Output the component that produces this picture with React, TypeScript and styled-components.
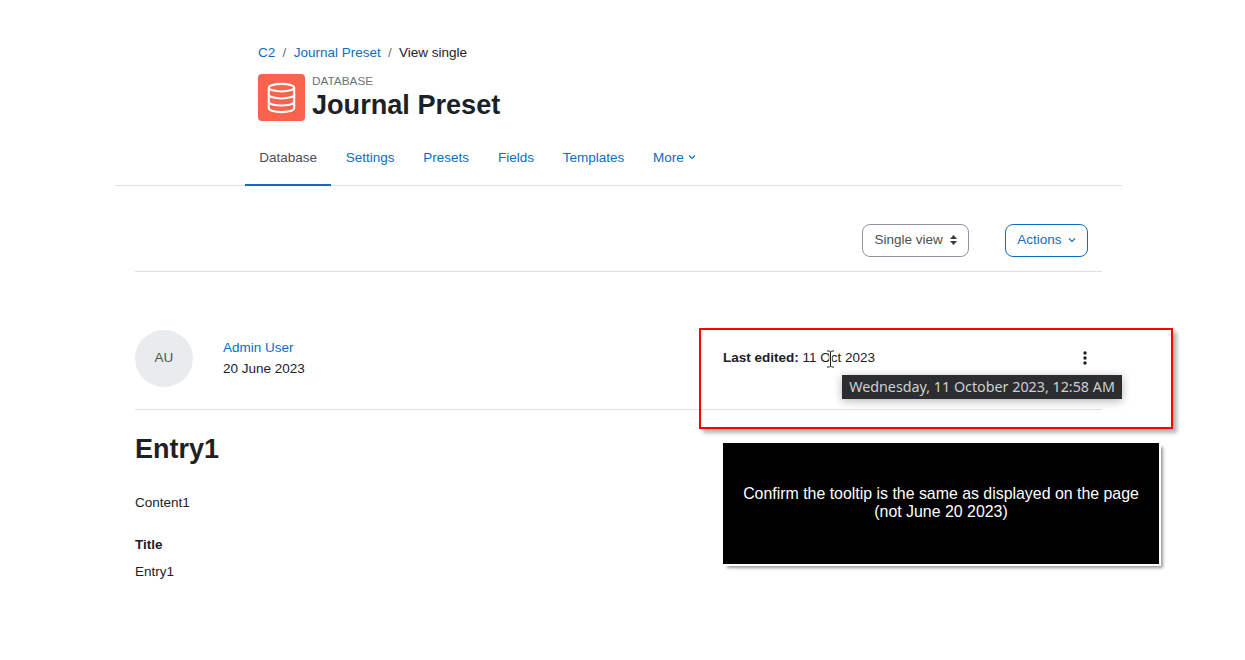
import React, { ReactElement } from 'react'
import styled, { createGlobalStyle } from 'styled-components'

const GlobalStyle = createGlobalStyle`
  html, body {
    margin: 0;
    padding: 0;
    background: #FFFFFF;
    font-family: "Liberation Sans", Arial, sans-serif;
    font-size: 13.5px;
    color: #1d2125;
  }
`

const Page = styled.div`
  position: relative;
  width: 1245px;
  height: 660px;
  overflow: hidden;
`

const Shell = styled.div`
  width: 1007px;
  margin-left: 115px;
`

const Header = styled.header`
  padding: 44px 0 0 143px;
`

const Breadcrumb = styled.nav`
  display: flex;
  align-items: center;
  height: 17px;
  line-height: 17px;
`

const Crumb = styled.a`
  color: #0f6cbf;
`

const CrumbDivider = styled.span`
  color: #6a737b;
  padding: 0 7.3px;
`

const Heading = styled.div`
  display: flex;
  align-items: flex-start;
  height: 47px;
  margin-top: 13px;
`

const ModuleIcon = styled.div`
  width: 47px;
  height: 47px;
  border-radius: 4px;
  background: #f7634d;
  display: flex;
  align-items: center;
  justify-content: center;
`

const HeadingText = styled.div`
  margin-left: 7px;
`

const Kicker = styled.div`
  color: #6a737b;
  font-size: 11.8px;
  line-height: 14px;
`

const Title = styled.h1`
  margin: 0;
  font-size: 27.1px;
  font-weight: 700;
  line-height: 33px;
`

const Tabs = styled.nav`
  display: flex;
  align-items: flex-start;
  height: 64px;
  padding-left: 129.8px;
  border-bottom: 1px solid #dee2e6;
`

const Tab = styled.a<{ $active?: boolean }>`
  display: flex;
  align-items: center;
  gap: 4px;
  height: 65px;
  box-sizing: border-box;
  padding: 16px 14.4px 7px;
  color: ${props => (props.$active ? '#495057' : '#0f6cbf')};
  border-bottom: 2px solid ${props => (props.$active ? '#0f6cbf' : 'transparent')};
`

const Content = styled.main`
  padding: 0 20px;
`

const Toolbar = styled.div`
  display: flex;
  justify-content: flex-end;
  gap: 36px;
  height: 86px;
  box-sizing: border-box;
  padding: 38px 14px 0 0;
  border-bottom: 1px solid #dee2e6;
`

const ToolButton = styled.div<{ $primary?: boolean }>`
  display: flex;
  align-items: center;
  gap: ${props => (props.$primary ? '6.5px' : '7.5px')};
  height: 33px;
  box-sizing: border-box;
  padding: 0 11px 2px;
  border-radius: 8px;
  border: 1px solid ${props => (props.$primary ? '#0f6cbf' : '#8f959e')};
  color: ${props => (props.$primary ? '#0f6cbf' : '#495057')};
`

const EntryRow = styled.div`
  display: flex;
  height: 138px;
  box-sizing: border-box;
  padding-top: 58px;
  border-bottom: 1px solid #dee2e6;
`

const Avatar = styled.div`
  width: 58px;
  height: 57px;
  box-sizing: border-box;
  padding-bottom: 2px;
  border-radius: 50%;
  background: #e9ecef;
  color: #495057;
  display: flex;
  align-items: center;
  justify-content: center;
`

const Author = styled.div`
  margin-left: 30px;
  width: 500px;
  padding-top: 7px;
  line-height: 21px;
`

const AuthorLink = styled.a`
  display: block;
  color: #0f6cbf;
`

const Edited = styled.div`
  display: flex;
  justify-content: space-between;
  align-items: center;
  width: 364px;
  height: 21px;
  padding-top: 17px;
`

const EntryBody = styled.article`
  padding-top: 23px;
`

const EntryTitle = styled.h2`
  margin: 0;
  font-size: 27px;
  font-weight: 700;
  line-height: 32px;
`

const Paragraph = styled.p`
  margin: 0;
  line-height: 20px;
`

const FirstParagraph = styled(Paragraph)`
  margin-top: 28px;
`

const FieldLabel = styled(Paragraph)`
  margin-top: 22px;
  font-weight: 700;
`

const FieldValue = styled(Paragraph)`
  margin-top: 7px;
`

const AnnotationFrame = styled.div`
  position: absolute;
  left: 699px;
  top: 328px;
  width: 474px;
  height: 101px;
  box-sizing: border-box;
  border: 2px solid #ff0000;
  box-shadow: 4px 4px 4px rgba(0, 0, 0, 0.3);
`

const Tooltip = styled.div`
  position: absolute;
  left: 842px;
  top: 375px;
  width: 280px;
  height: 24px;
  box-sizing: border-box;
  padding-bottom: 2px;
  display: flex;
  align-items: center;
  justify-content: center;
  background: #2b2d31;
  color: #d0d0d0;
  font-family: "Noto Sans", sans-serif;
  font-size: 14.3px;
  white-space: nowrap;
  box-shadow: 0 2px 10px rgba(0, 0, 0, 0.3);
`

const Callout = styled.div`
  position: absolute;
  left: 723px;
  top: 443px;
  width: 436px;
  height: 121px;
  box-sizing: border-box;
  padding-bottom: 1px;
  display: flex;
  align-items: center;
  justify-content: center;
  text-align: center;
  background: #000000;
  color: #FFFFFF;
  font-size: 15.9px;
  line-height: 18px;
  box-shadow: 2px 2px 0 #FFFFFF, 4px 4px 3px rgba(0, 0, 0, 0.4);
`

const Cursor = styled.svg`
  position: absolute;
  left: 826px;
  top: 350px;
`

const DatabaseIcon = () => (
  <svg width="29" height="32" viewBox="0 0 30 34" fill="none" stroke="#FFFFFF" strokeWidth="2.2">
    <ellipse cx="15" cy="6" rx="13.5" ry="4" />
    <path d="M1.5 6v22c0 2.2 6 4 13.5 4s13.5-1.8 13.5-4V6" />
    <path d="M1.5 13.5c0 2.2 6 4 13.5 4s13.5-1.8 13.5-4" />
    <path d="M1.5 21c0 2.2 6 4 13.5 4s13.5-1.8 13.5-4" />
  </svg>
)

const ChevronDown = ({ color }: { color: string }) => (
  <svg width="8" height="6" viewBox="0 0 8 6" fill="none" stroke={color} strokeWidth="1.1">
    <path d="M1 1.5l3 3 3-3" />
  </svg>
)

const SortIcon = () => (
  <svg width="7" height="10" viewBox="0 0 7 10" fill="#343a40">
    <path d="M3.5 0L7 4H0z" />
    <path d="M3.5 10L0 6h7z" />
  </svg>
)

const KebabIcon = () => (
  <svg width="4" height="14" viewBox="0 0 4 14" fill="#1d2125">
    <circle cx="2" cy="2" r="1.7" />
    <circle cx="2" cy="7" r="1.7" />
    <circle cx="2" cy="12" r="1.7" />
  </svg>
)

const tabs = ['Settings', 'Presets', 'Fields', 'Templates']

function App(): ReactElement {
  return (
    <Page>
      <GlobalStyle />
      <Shell>
        <Header>
          <Breadcrumb>
            <Crumb>C2</Crumb>
            <CrumbDivider>/</CrumbDivider>
            <Crumb>Journal Preset</Crumb>
            <CrumbDivider>/</CrumbDivider>
            <span>View single</span>
          </Breadcrumb>
          <Heading>
            <ModuleIcon>
              <DatabaseIcon />
            </ModuleIcon>
            <HeadingText>
              <Kicker>DATABASE</Kicker>
              <Title>Journal Preset</Title>
            </HeadingText>
          </Heading>
        </Header>
        <Tabs>
          <Tab $active>Database</Tab>
          {tabs.map(tab => <Tab key={tab}>{tab}</Tab>)}
          <Tab>More <ChevronDown color="#0f6cbf" /></Tab>
        </Tabs>
        <Content>
          <Toolbar>
            <ToolButton>Single view <SortIcon /></ToolButton>
            <ToolButton $primary>Actions <ChevronDown color="#0f6cbf" /></ToolButton>
          </Toolbar>
          <EntryRow>
            <Avatar>AU</Avatar>
            <Author>
              <AuthorLink>Admin User</AuthorLink>
              20 June 2023
            </Author>
            <Edited>
              <span><b>Last edited:</b> 11 Oct 2023</span>
              <KebabIcon />
            </Edited>
          </EntryRow>
          <EntryBody>
            <EntryTitle>Entry1</EntryTitle>
            <FirstParagraph>Content1</FirstParagraph>
            <FieldLabel>Title</FieldLabel>
            <FieldValue>Entry1</FieldValue>
          </EntryBody>
        </Content>
      </Shell>
      <AnnotationFrame />
      <Tooltip>Wednesday, 11 October 2023, 12:58 AM</Tooltip>
      <Callout>
        <div>
          Confirm the tooltip is the same as displayed on the page
          <br />
          (not June 20 2023)
        </div>
      </Callout>
      <Cursor width="9" height="18" viewBox="0 0 9 18" fill="none">
        <path d="M1 1h2.5l1 1 1-1H8M4.5 2v14M1 17h2.5l1-1 1 1H8" stroke="#FFFFFF" strokeWidth="2.5" />
        <path d="M1 1h2.5l1 1 1-1H8M4.5 2v14M1 17h2.5l1-1 1 1H8" stroke="#222222" strokeWidth="1" />
      </Cursor>
    </Page>
  )
}

export default App
